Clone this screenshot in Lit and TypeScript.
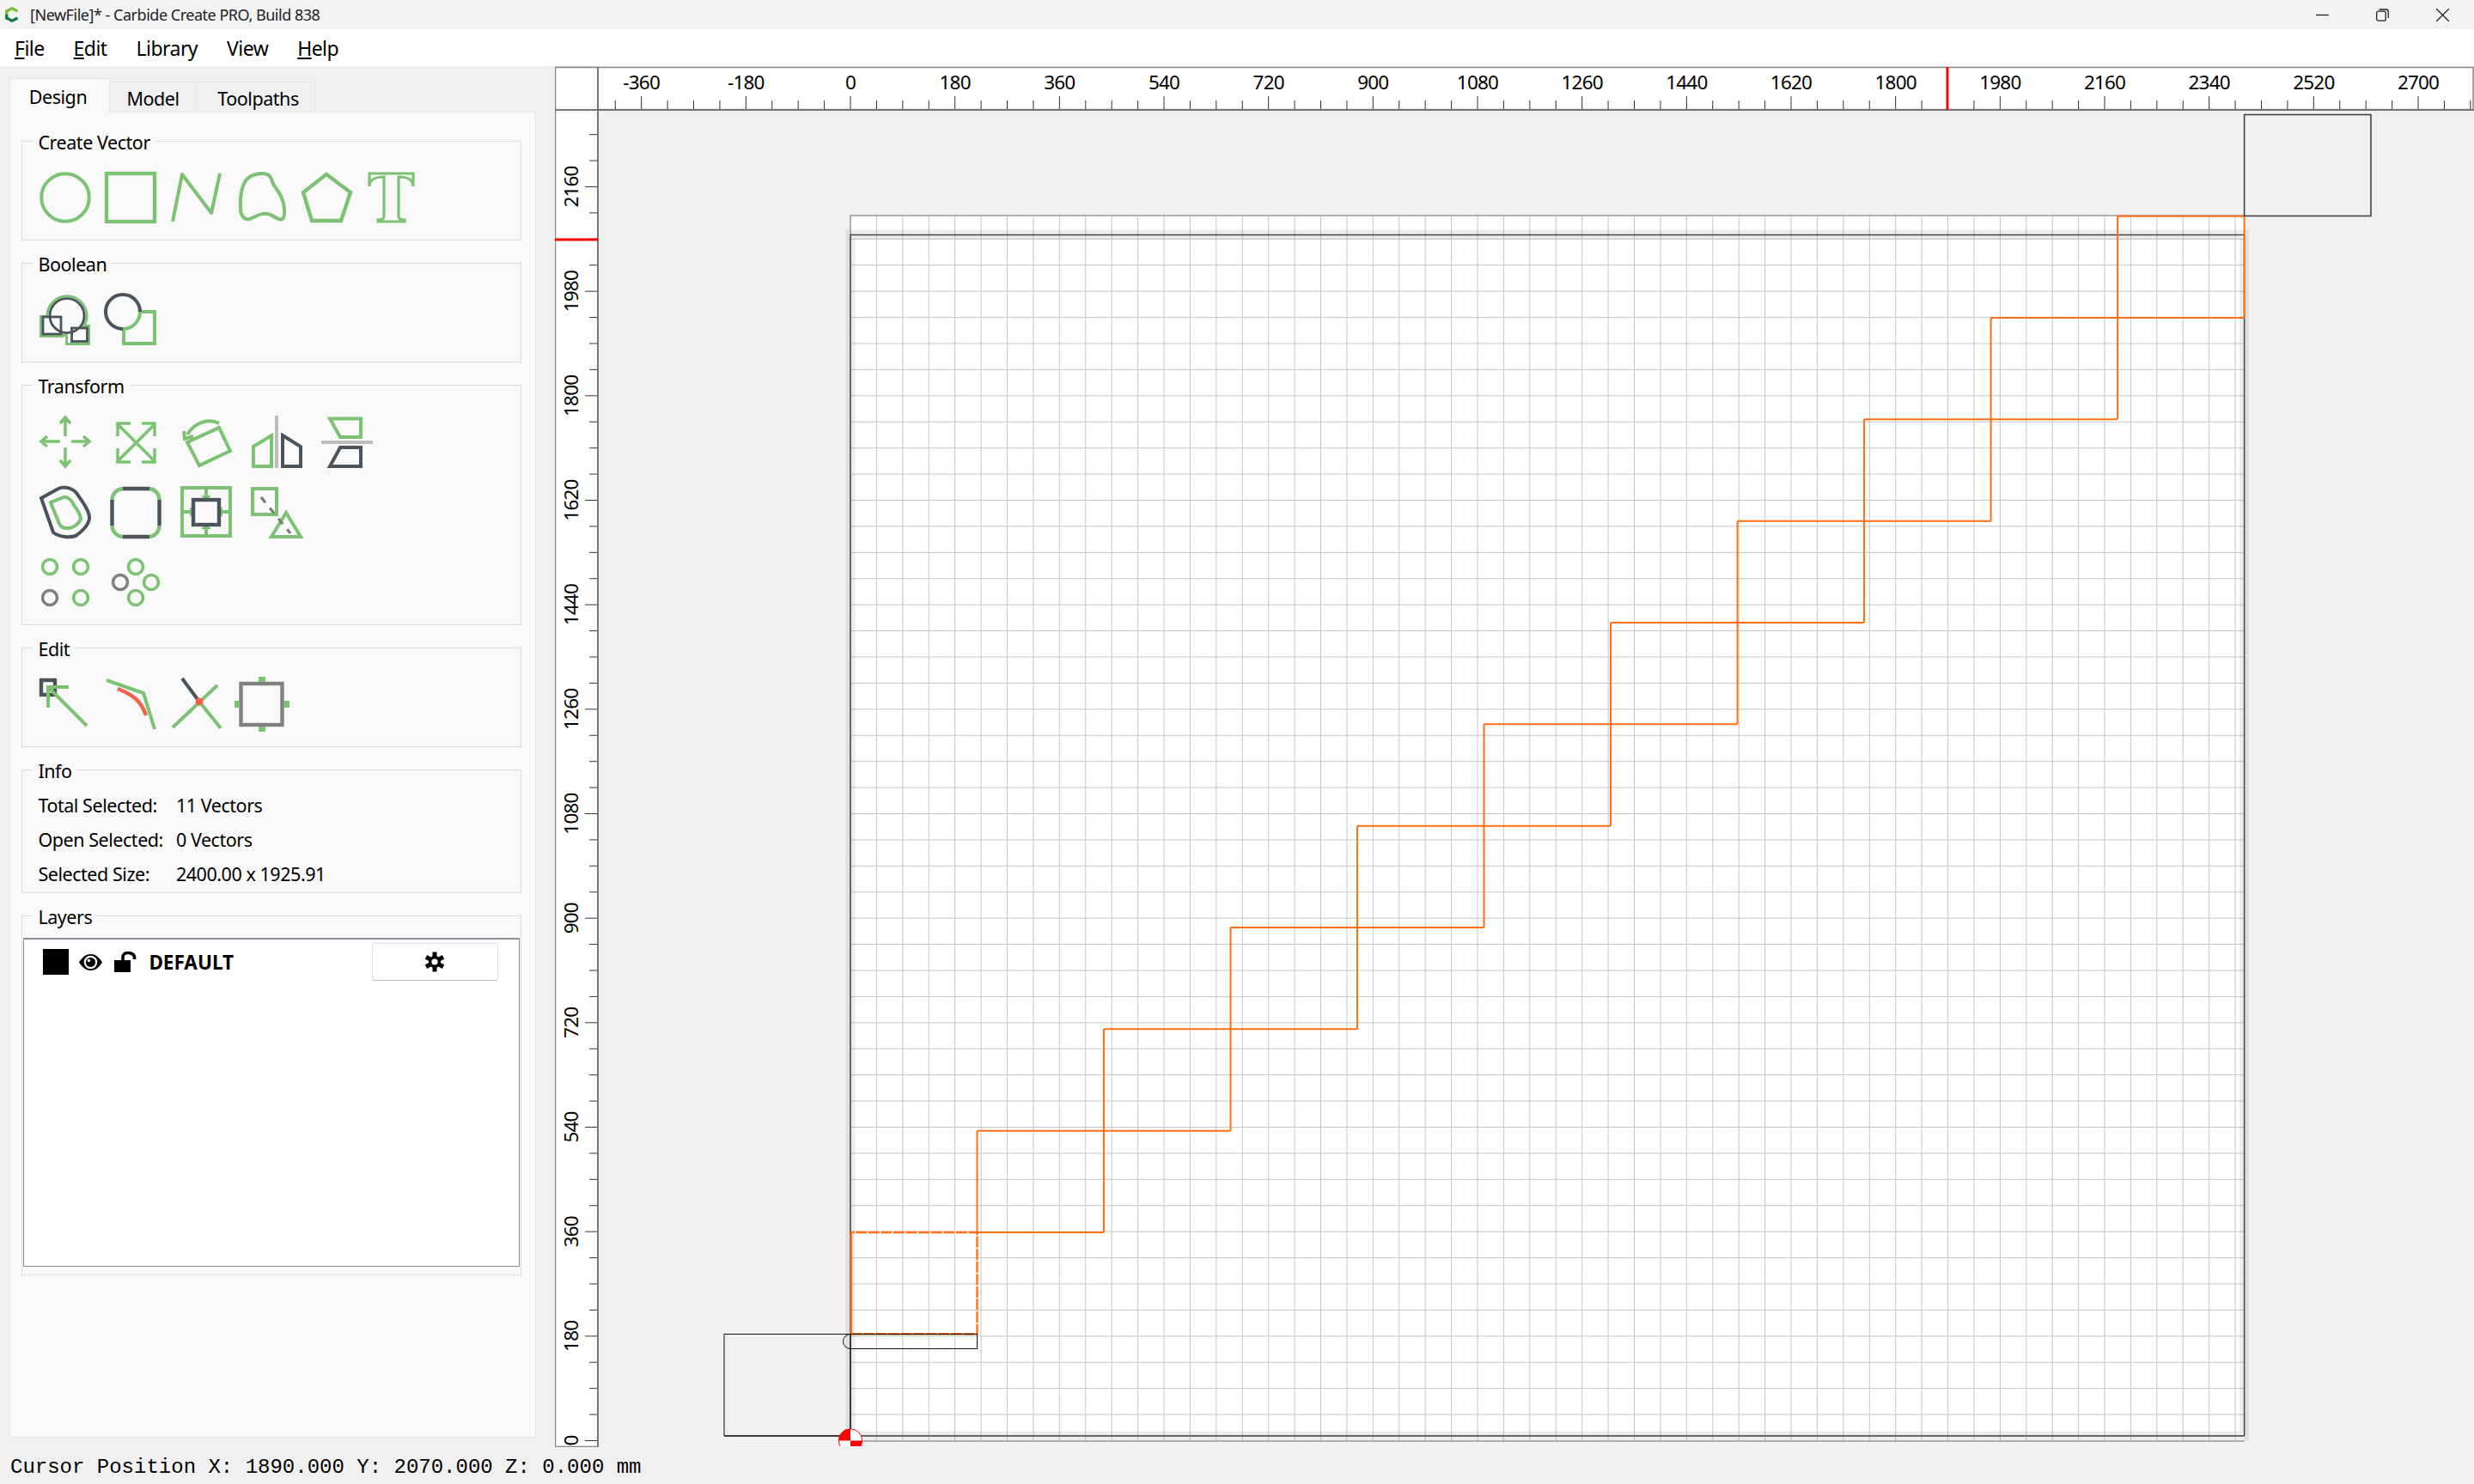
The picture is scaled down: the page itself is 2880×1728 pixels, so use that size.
import { LitElement, html, css, svg } from "lit";
import { customElement } from "lit/decorators.js";

const GREEN = "#7dc274";
const DARK = "#4b535c";
const GREY = "#808080";
const RED = "#f0654a";

// workspace scale, screen px for one ruler step of 45 mm
const STEP = 30.417;
const X0 = 990;
const Y0 = 1677.5;
const toX = (mm: number) => X0 + (mm / 45) * STEP;
const toY = (mm: number) => Y0 - (mm / 45) * STEP;

const g = (body: unknown, width = 4, color = GREEN) =>
  svg`<g fill="none" stroke=${color} stroke-width=${width}>${body}</g>`;

const UNION_SHAPES = svg`<circle cx="32" cy="24.7" r="21.5"></circle><rect x="3" y="27" width="22" height="20"></rect><rect x="33" y="38" width="23" height="18"></rect>`;

const ICONS: Record<string, unknown> = {
  circle: g(svg`<circle cx="30" cy="30" r="27.8"></circle>`),
  rect: g(svg`<rect x="2" y="2" width="56" height="56"></rect>`, 4.4),
  line: g(svg`<polyline points="2,58 13,3 47,48 57,2" stroke-linejoin="round"></polyline>`),
  blob: g(svg`<path d="M13 8C20 2 30 1 36 3C42 5 41 12 44 16C50 24 57 34 56 48C56 60 48 55 42 51C34 46 26 50 18 54C10 58 5 52 5 42C4 28 7 14 13 8Z"></path>`),
  polygon: g(svg`<polygon points="29,3 57,24 46,57 12,57 2,24"></polygon>`, 4.4),
  text: g(svg`<path d="M3 2H54V17C54 9 46 6 37 6V52C37 55 40 56 44 56V58H13V56C17 56 20 55 20 52V6C11 6 3 9 3 17Z"></path>`, 3.2),
  union: svg`
    ${g(UNION_SHAPES, 6)}
    <g fill="#f9f9f9">${UNION_SHAPES}</g>
    ${g(svg`<circle cx="32" cy="24.7" r="20"></circle><rect x="4" y="26" width="21" height="20"></rect><rect x="37.5" y="39" width="18" height="15.5"></rect>`, 2.8, DARK)}`,
  subtract: svg`
    ${g(svg`<path d="M41 20H58V57H22V40A20 20 0 0 0 41 20Z"></path>`)}
    ${g(svg`<path d="M41 20A20 20 0 1 0 21 40"></path>`, 4, DARK)}`,
  move: g(svg`<path d="M30 5V24M30 37V57M5 30H24M37 30H56M24 9L30 2L36 9M24 52L30 59L36 52M9 24L2 30L9 36M51 24L58 30L51 36"></path>`, 3.5),
  scale: g(svg`<path d="M8 9L53 54M53 9L8 54M9 24V9H24M37 9H52V24M9 38V54H24M52 38V54H37"></path>`, 3.5),
  rotate: g(svg`<polygon points="8,31 45,14 58,41 22,58"></polygon><path d="M45 9C34 3 17 7 8 22M4 18L5 27L15 24"></path>`),
  mirrorV: svg`
    <path d="M30 0V61" stroke="#bdbdbd" stroke-width="4"></path>
    ${g(svg`<path d="M3 36L24 23V59H3Z"></path>`)}
    ${g(svg`<path d="M37 23L58 36V59H37Z"></path>`, 4, DARK)}`,
  mirrorH: svg`
    <path d="M0 31H60" stroke="#bdbdbd" stroke-width="4"></path>
    ${g(svg`<path d="M10 3.5H46V25H22Z"></path>`)}
    ${g(svg`<path d="M22 37H46V59H10Z"></path>`, 4, DARK)}`,
  offset: svg`
    ${g(svg`<path d="M2 14L22 3C28 0 38 2 43 8C50 18 59 30 58 38C57 46 48 54 42 58C36 60 24 60 16 54Z"></path>`, 4, DARK)}
    ${g(svg`<path d="M13 19L28 13C33 12 38 17 40 22C44 28 48 33 48 38C46 44 38 50 32 49C27 49 24 46 23 44Z"></path>`)}`,
  fillet: svg`
    ${g(svg`<path d="M15 3H46M15 59H46M2.5 16V46M57.5 16V46"></path>`, 4.4, DARK)}
    ${g(svg`<path d="M2.5 16A13 13 0 0 1 15 3M46 3A13 13 0 0 1 57.5 16M57.5 46A13 13 0 0 1 46 59M15 59A13 13 0 0 1 2.5 46"></path>`, 4.4)}`,
  inset: svg`
    ${g(svg`<rect x="2" y="2" width="56" height="56"></rect><path d="M30 2V12M30 48V58M2 30H12M48 30H58"></path>`, 4)}
    <path d="M24 11H36L30 17ZM24 50H36L30 44ZM11 24V36L17 30ZM49 24V36L43 30Z" fill=${GREEN}></path>
    ${g(svg`<rect x="15" y="16" width="30" height="29"></rect>`, 4.4, DARK)}`,
  align: svg`
    ${g(svg`<rect x="2" y="3" width="28" height="30"></rect><path d="M41 31L58 59H24Z"></path>`)}
    <path d="M12 13L46 55" stroke="#77777d" stroke-width="3" stroke-dasharray="8 8" fill="none"></path>`,
  grid: svg`
    ${g(svg`<circle cx="12" cy="12" r="8.5"></circle><circle cx="48" cy="12" r="8.5"></circle><circle cx="48" cy="48" r="8.5"></circle>`, 3.6)}
    ${g(svg`<circle cx="12" cy="48" r="8.5"></circle>`, 3.6, GREY)}`,
  ring: svg`
    ${g(svg`<circle cx="30" cy="12" r="8.5"></circle><circle cx="48" cy="30" r="8.5"></circle><circle cx="30" cy="48" r="8.5"></circle>`, 3.6)}
    ${g(svg`<circle cx="12" cy="30" r="8.5"></circle>`, 3.6, GREY)}`,
  nodes: svg`
    ${g(svg`<rect x="2" y="2" width="16" height="17"></rect>`, 4.4, DARK)}
    ${g(svg`<path d="M10 34V10H34M10 10L55 55"></path>`, 4)}`,
  smooth: svg`
    ${g(svg`<polyline points="2,2 45,17 58,59"></polyline>`)}
    ${g(svg`<path d="M15 12C33 19 42 26 48 43"></path>`, 4.4, RED)}`,
  trim: svg`
    ${g(svg`<path d="M54 8L2 57M33 27L58 58"></path>`)}
    ${g(svg`<path d="M13 0L33 27"></path>`, 4, DARK)}
    <circle cx="33" cy="27" r="4.5" fill=${RED}></circle>`,
  tabs: svg`
    ${g(svg`<rect x="5.5" y="6" width="48" height="48"></rect>`, 4.4, GREY)}
    <path d="M26 -2H34V4H26ZM26 56H34V62H26ZM-2 26H4V34H-2ZM56 26H62V34H56Z" fill=${GREEN}></path>`,
};

const icon = (name: string, viewBox = "0 0 60 60") =>
  html`<svg class="icon" viewBox=${viewBox}>${ICONS[name]}</svg>`;

function rulers() {
  const top = [];
  for (let k = -9; toX(k * 45) < 2879; k++) {
    const x = toX(k * 45);
    const major = k % 4 === 0;
    top.push(svg`<line class="tick" x1=${x} x2=${x} y1=${major ? 112 : 117} y2="127"></line>`);
    if (major) top.push(svg`<text class="rl" x=${x} y="103.5" text-anchor="middle">${k * 45}</text>`);
  }
  const left = [];
  for (let k = 0; toY(k * 45) > 140; k++) {
    const y = toY(k * 45);
    const major = k % 4 === 0;
    left.push(svg`<line class="tick" y1=${y} y2=${y} x1=${major ? 681 : 686} x2="695"></line>`);
    if (major) left.push(svg`<text class="rl" transform="translate(673 ${y}) rotate(-90)" text-anchor="middle">${k * 45}</text>`);
  }
  return svg`
    <rect x="646.5" y="78.5" width="2232.5" height="49" fill="#fff" stroke="#888" stroke-width="1.5"></rect>
    <rect x="646.5" y="78.5" width="49.5" height="1606" fill="#fff" stroke="#888" stroke-width="1.5"></rect>
    ${top}${left}
    <path d="M646 128H2880M696 78V1685" stroke="#747474" stroke-width="2" fill="none"></path>
    <rect x="2265.5" y="78" width="3" height="50" fill="#f00"></rect>
    <rect x="646" y="277.5" width="50" height="3" fill="#f00"></rect>`;
}

function workspace() {
  const RIGHT = 2612.6;
  const TOP = 251;
  const lines = [];
  for (let k = 1; toX(k * 45) < RIGHT; k++) {
    lines.push(svg`<line class="grid" x1=${toX(k * 45)} x2=${toX(k * 45)} y1=${TOP} y2="1678"></line>`);
  }
  for (let k = 1; toY(k * 45) > TOP; k++) {
    lines.push(svg`<line class="grid" y1=${toY(k * 45)} y2=${toY(k * 45)} x1=${X0} x2=${RIGHT}></line>`);
  }

  // staircase of 11 vectors, 2400 x 1925.91 mm overall
  const sx = (i: number) => X0 + (i * (RIGHT - X0)) / 11;
  const sy = (i: number) => 1553.3 - (i * (1553.3 - 251.7)) / 11;
  let d = `M${sx(10)} ${sy(11)}H${sx(11)}V${sy(10)}`;
  for (let h = 2; h <= 10; h++) {
    d += `M${sx(h - 1)} ${sy(h)}H${sx(h + 1)}`;
    d += `M${sx(h)} ${sy(h - 1)}V${sy(h + 1)}`;
  }
  d += `M${sx(1)} ${sy(1)}H${sx(2)}M${sx(1)} ${sy(1)}V${sy(2)}`;
  const first = `M${sx(0) + 1} ${sy(0)}H${sx(1)}V${sy(1)}H${sx(0) + 1}Z`;
  const firstDashed = `M${sx(0) + 1} ${sy(0)}H${sx(1)}V${sy(1)}H${sx(0) + 1}`;

  return svg`
    <rect x=${X0} y=${TOP} width=${RIGHT - X0} height=${1678 - TOP} fill="#fff"></rect>
    ${lines}
    <rect x=${X0} y="273" width=${RIGHT - X0} height="1399" fill="none" stroke="#000" stroke-opacity="0.07" stroke-width="11"></rect>
    <path d="M${X0} 1678V${TOP}H${RIGHT}M${X0} 1678H${RIGHT}" fill="none" stroke="#999" stroke-width="1.5"></path>
    <path d="M${RIGHT} 1672H843M${X0} 1672V273" fill="none" stroke="#666" stroke-width="2"></path>
    <path d="M${X0} 273.5H${RIGHT}V1672" fill="none" stroke="#444" stroke-width="1.5"></path>
    <path d=${first} fill="none" stroke="#ff7015" stroke-width="2.4"></path>
    <path d=${firstDashed} fill="none" stroke="#fff" stroke-width="2.4" stroke-dasharray="1.6 13" stroke-dashoffset="-12"></path>
    <path d=${d} fill="none" stroke="#ff6f12" stroke-width="2"></path>
    <path d="M843 1553.5H990V1672H843ZM990 1553.5H1137.5V1570.5H990" fill="none" stroke="#111" stroke-width="1"></path>
    <path d="M990 1553.5A8.5 8.5 0 0 0 990 1570.5" fill="none" stroke="#111" stroke-width="1"></path>
    <rect x="2612.6" y="133.5" width="147.4" height="118" fill="none" stroke="#3c3c3c" stroke-width="1.5"></rect>
    <g clip-path="url(#canvasClip)">
      <circle cx=${X0} cy="1677.5" r="13.7" fill="#fff" stroke="#f00" stroke-width="1"></circle>
      <path d="M${X0} 1677.5V1663.8A13.7 13.7 0 0 0 976.3 1677.5ZM${X0} 1677.5H1003.7A13.7 13.7 0 0 1 ${X0} 1691.2Z" fill="#f00"></path>
    </g>`;
}

@customElement("app-root")
export class AppRoot extends LitElement {
  protected render() {
    return html`
      <div class="titlebar">
        <svg class="logo" viewBox="0 0 16 18" fill="none" stroke-width="3.4">
          <path d="M14.5 5L8 1.8L1.7 5V9" stroke="#79bf3f"></path>
          <path d="M1.7 9V13L8 16.2L14.5 13" stroke="#0f7d46"></path>
        </svg>
        <span class="title">[NewFile]* - Carbide Create PRO, Build 838</span>
        <div class="controls">
          <svg viewBox="0 0 15 15" class="min"><path d="M0 7.5H15"></path></svg>
          <svg viewBox="0 0 15 15" class="max"><rect x="0.7" y="3.2" width="10.5" height="11" rx="2"></rect><path d="M3.5 1H11.5A3 3 0 0 1 14.3 4V11"></path></svg>
          <svg viewBox="0 0 15 15" class="close"><path d="M0 0L15 15M15 0L0 15"></path></svg>
        </div>
      </div>
      <div class="menubar">
        <span><u>F</u>ile</span>
        <span><u>E</u>dit</span>
        <span>Library</span>
        <span>View</span>
        <span><u>H</u>elp</span>
      </div>
      <div class="body">
        <div class="side">
          <div class="tabs">
            <div class="tab active">Design</div>
            <div class="tab model">Model</div>
            <div class="tab paths">Toolpaths</div>
          </div>
          <div class="pane">
            <section class="group">
              <h3>Create Vector</h3>
              <div class="icons">${["circle", "rect", "line", "blob", "polygon", "text"].map((n) => icon(n))}</div>
            </section>
            <section class="group">
              <h3>Boolean</h3>
              <div class="icons">${icon("union", "0 -1 60 60")}${icon("subtract", "0 -1 60 60")}</div>
            </section>
            <section class="group transform">
              <h3>Transform</h3>
              <div class="icon-grid">
                ${["move", "scale", "rotate", "mirrorV", "mirrorH", "offset", "fillet", "inset", "align", "grid", "ring"].map((n) => icon(n))}
              </div>
            </section>
            <section class="group">
              <h3>Edit</h3>
              <div class="icons">${["nodes", "smooth", "trim", "tabs"].map((n) => icon(n))}</div>
            </section>
            <section class="group info">
              <h3>Info</h3>
              <div class="info-grid">
                <span>Total Selected:</span><span>11 Vectors</span>
                <span>Open Selected:</span><span>0 Vectors</span>
                <span>Selected Size:</span><span>2400.00 x 1925.91</span>
              </div>
            </section>
            <section class="group layers">
              <h3>Layers</h3>
              <div class="list">
                <div class="layer">
                  <div class="swatch"></div>
                  <svg class="eye" viewBox="0 0 27 19">
                    <path d="M0 9.5C4 3 8.5 0 13.5 0S23 3 27 9.5C23 16 18.5 19 13.5 19S4 16 0 9.5Z"></path>
                    <circle cx="13.5" cy="9.5" r="7.8" fill="#fff"></circle>
                    <circle cx="13.5" cy="9.5" r="5.6"></circle>
                    <circle cx="11.5" cy="7.5" r="1.8" fill="#fff"></circle>
                  </svg>
                  <svg class="lock" viewBox="0 0 27 24">
                    <path d="M1 10H20V24H1Z"></path>
                    <path d="M11 10V6.5C11 3.5 13.5 1.5 17 1.5S24.5 3.5 24.5 6.5V9" fill="none" stroke="#000" stroke-width="3.6"></path>
                  </svg>
                  <span class="name">DEFAULT</span>
                  <div class="gear-btn">
                    <svg class="gear" viewBox="-12 -12 24 24">
                      <path d="M0 -11.5V11.5M-10 -5.75L10 5.75M-10 5.75L10 -5.75" stroke="#000" stroke-width="5"></path>
                      <circle r="7" fill="#000"></circle>
                      <circle r="3.6" fill="#fff"></circle>
                    </svg>
                  </div>
                </div>
              </div>
            </section>
          </div>
        </div>
        <svg class="canvas" viewBox="646 77 2234 1608">
          <defs><clipPath id="canvasClip"><rect x="696" y="128" width="2184" height="1556"></rect></clipPath></defs>
          ${rulers()}
          ${workspace()}
        </svg>
      </div>
      <div class="status">Cursor Position X: 1890.000 Y: 2070.000 Z: 0.000 mm</div>
    `;
  }

  static styles = css`
    :host {
      display: block;
      width: 2880px;
      height: 1728px;
      overflow: hidden;
      background: #f0f0f0;
      color: #000;
      font-family: "Noto Sans", sans-serif;
      font-size: 21.5px;
      letter-spacing: -0.45px;
    }

    * {
      box-sizing: border-box;
    }

    .titlebar {
      display: flex;
      align-items: center;
      height: 34px;
      background: #f3f3f3;
      padding-left: 6px;
    }

    .logo {
      width: 16px;
      height: 18px;
    }

    .title {
      margin-left: 13px;
      font-size: 18px;
      letter-spacing: -0.48px;
      color: #222;
    }

    .controls {
      margin-left: auto;
      display: flex;
      align-items: center;
      gap: 55px;
      padding-right: 29px;
    }

    .controls svg {
      display: block;
      width: 15px;
      height: 15px;
      fill: none;
      stroke: #222;
      stroke-width: 1.3;
    }

    .menubar {
      display: flex;
      align-items: center;
      gap: 34px;
      height: 43px;
      padding-left: 17px;
      background: #fff;
      font-size: 23px;
      letter-spacing: -0.55px;
    }

    .body {
      display: flex;
      height: 1608px;
    }

    .side {
      flex: none;
      width: 646px;
      padding: 14px 0 0 11px;
    }

    .tabs {
      display: flex;
      align-items: flex-end;
      height: 39px;
    }

    .tab {
      height: 35px;
      display: flex;
      align-items: center;
      justify-content: center;
      padding-top: 2px;
      border: 1px solid #e6e6e6;
      border-bottom: none;
      border-left: none;
      background: #f0f0f0;
    }

    .tab.active {
      width: 117px;
      height: 40px;
      margin-bottom: -1px;
      padding: 2px 4px 0 0;
      border-left: 1px solid #e6e6e6;
      background: #f9f9f9;
      position: relative;
      z-index: 1;
    }

    .tab.model {
      width: 101px;
    }

    .tab.paths {
      width: 139px;
      padding-left: 5px;
    }

    .pane {
      width: 612.5px;
      height: 1544px;
      padding: 33.3px 16px 0 13.4px;
      background: #f9f9f9;
      border: 1px solid #e4e4e4;
    }

    .group {
      position: relative;
      height: 116px;
      margin-bottom: 26px;
      padding: 35px 0 0 19.6px;
      border: 1px solid #dcdcdc;
    }

    .group h3 {
      position: absolute;
      top: 1px;
      left: 12px;
      margin: 0;
      padding: 0 6px;
      transform: translateY(-50%);
      background: #f9f9f9;
      font-size: inherit;
      font-weight: 400;
      line-height: 28px;
    }

    .icons {
      display: flex;
      gap: 16.3px;
    }

    .icon {
      display: block;
      flex: none;
      width: 60px;
      height: 60px;
      overflow: visible;
    }

    .transform {
      height: 280px;
      padding-top: 35px;
    }

    .icon-grid {
      display: grid;
      grid-template-columns: repeat(5, 60px);
      gap: 22px;
    }

    .icon-grid .icon:nth-child(10) {
      grid-column: 1;
    }

    .info {
      height: 144px;
      padding-top: 20px;
      padding-left: 18px;
    }

    .info-grid {
      display: grid;
      grid-template-columns: 160.5px 1fr;
      grid-auto-rows: 40px;
      align-items: center;
    }

    .layers {
      height: 418.6px;
      margin-bottom: 0;
      padding: 25px 1px 9px 1px;
    }

    .list {
      height: 100%;
      background: #fff;
      border: 1px solid #8b9098;
      border-top-width: 2px;
      padding: 4px 24px 0 22px;
    }

    .layer {
      display: flex;
      align-items: center;
      height: 44px;
    }

    .swatch {
      width: 30px;
      height: 30px;
      background: #000;
    }

    .eye {
      width: 27px;
      height: 19px;
      margin-left: 12px;
    }

    .lock {
      width: 27px;
      height: 24px;
      margin-left: 13px;
    }

    .name {
      margin-left: 14px;
      font-weight: 700;
      font-size: 22.5px;
      letter-spacing: 0;
    }

    .gear-btn {
      margin-left: auto;
      width: 147px;
      height: 44px;
      display: flex;
      align-items: center;
      justify-content: center;
      background: #fff;
      border: 1px solid #dedede;
      border-bottom-color: #b8b8b8;
      border-radius: 3px;
    }

    .gear {
      width: 24px;
      height: 24px;
    }

    .canvas {
      display: block;
      flex: none;
      width: 2234px;
      height: 1608px;
    }

    .canvas .tick {
      stroke: #333;
      stroke-width: 1;
    }

    .canvas .grid {
      stroke: #c6c6c6;
      stroke-width: 1;
    }

    .canvas .rl {
      font-family: "Noto Sans", sans-serif;
      font-size: 22.5px;
      letter-spacing: -0.8px;
      fill: #000;
    }

    .status {
      height: 43px;
      display: flex;
      align-items: center;
      padding: 3px 0 0 12px;
      font-family: "Liberation Mono", monospace;
      font-size: 24px;
      letter-spacing: 0;
    }
  `;
}
